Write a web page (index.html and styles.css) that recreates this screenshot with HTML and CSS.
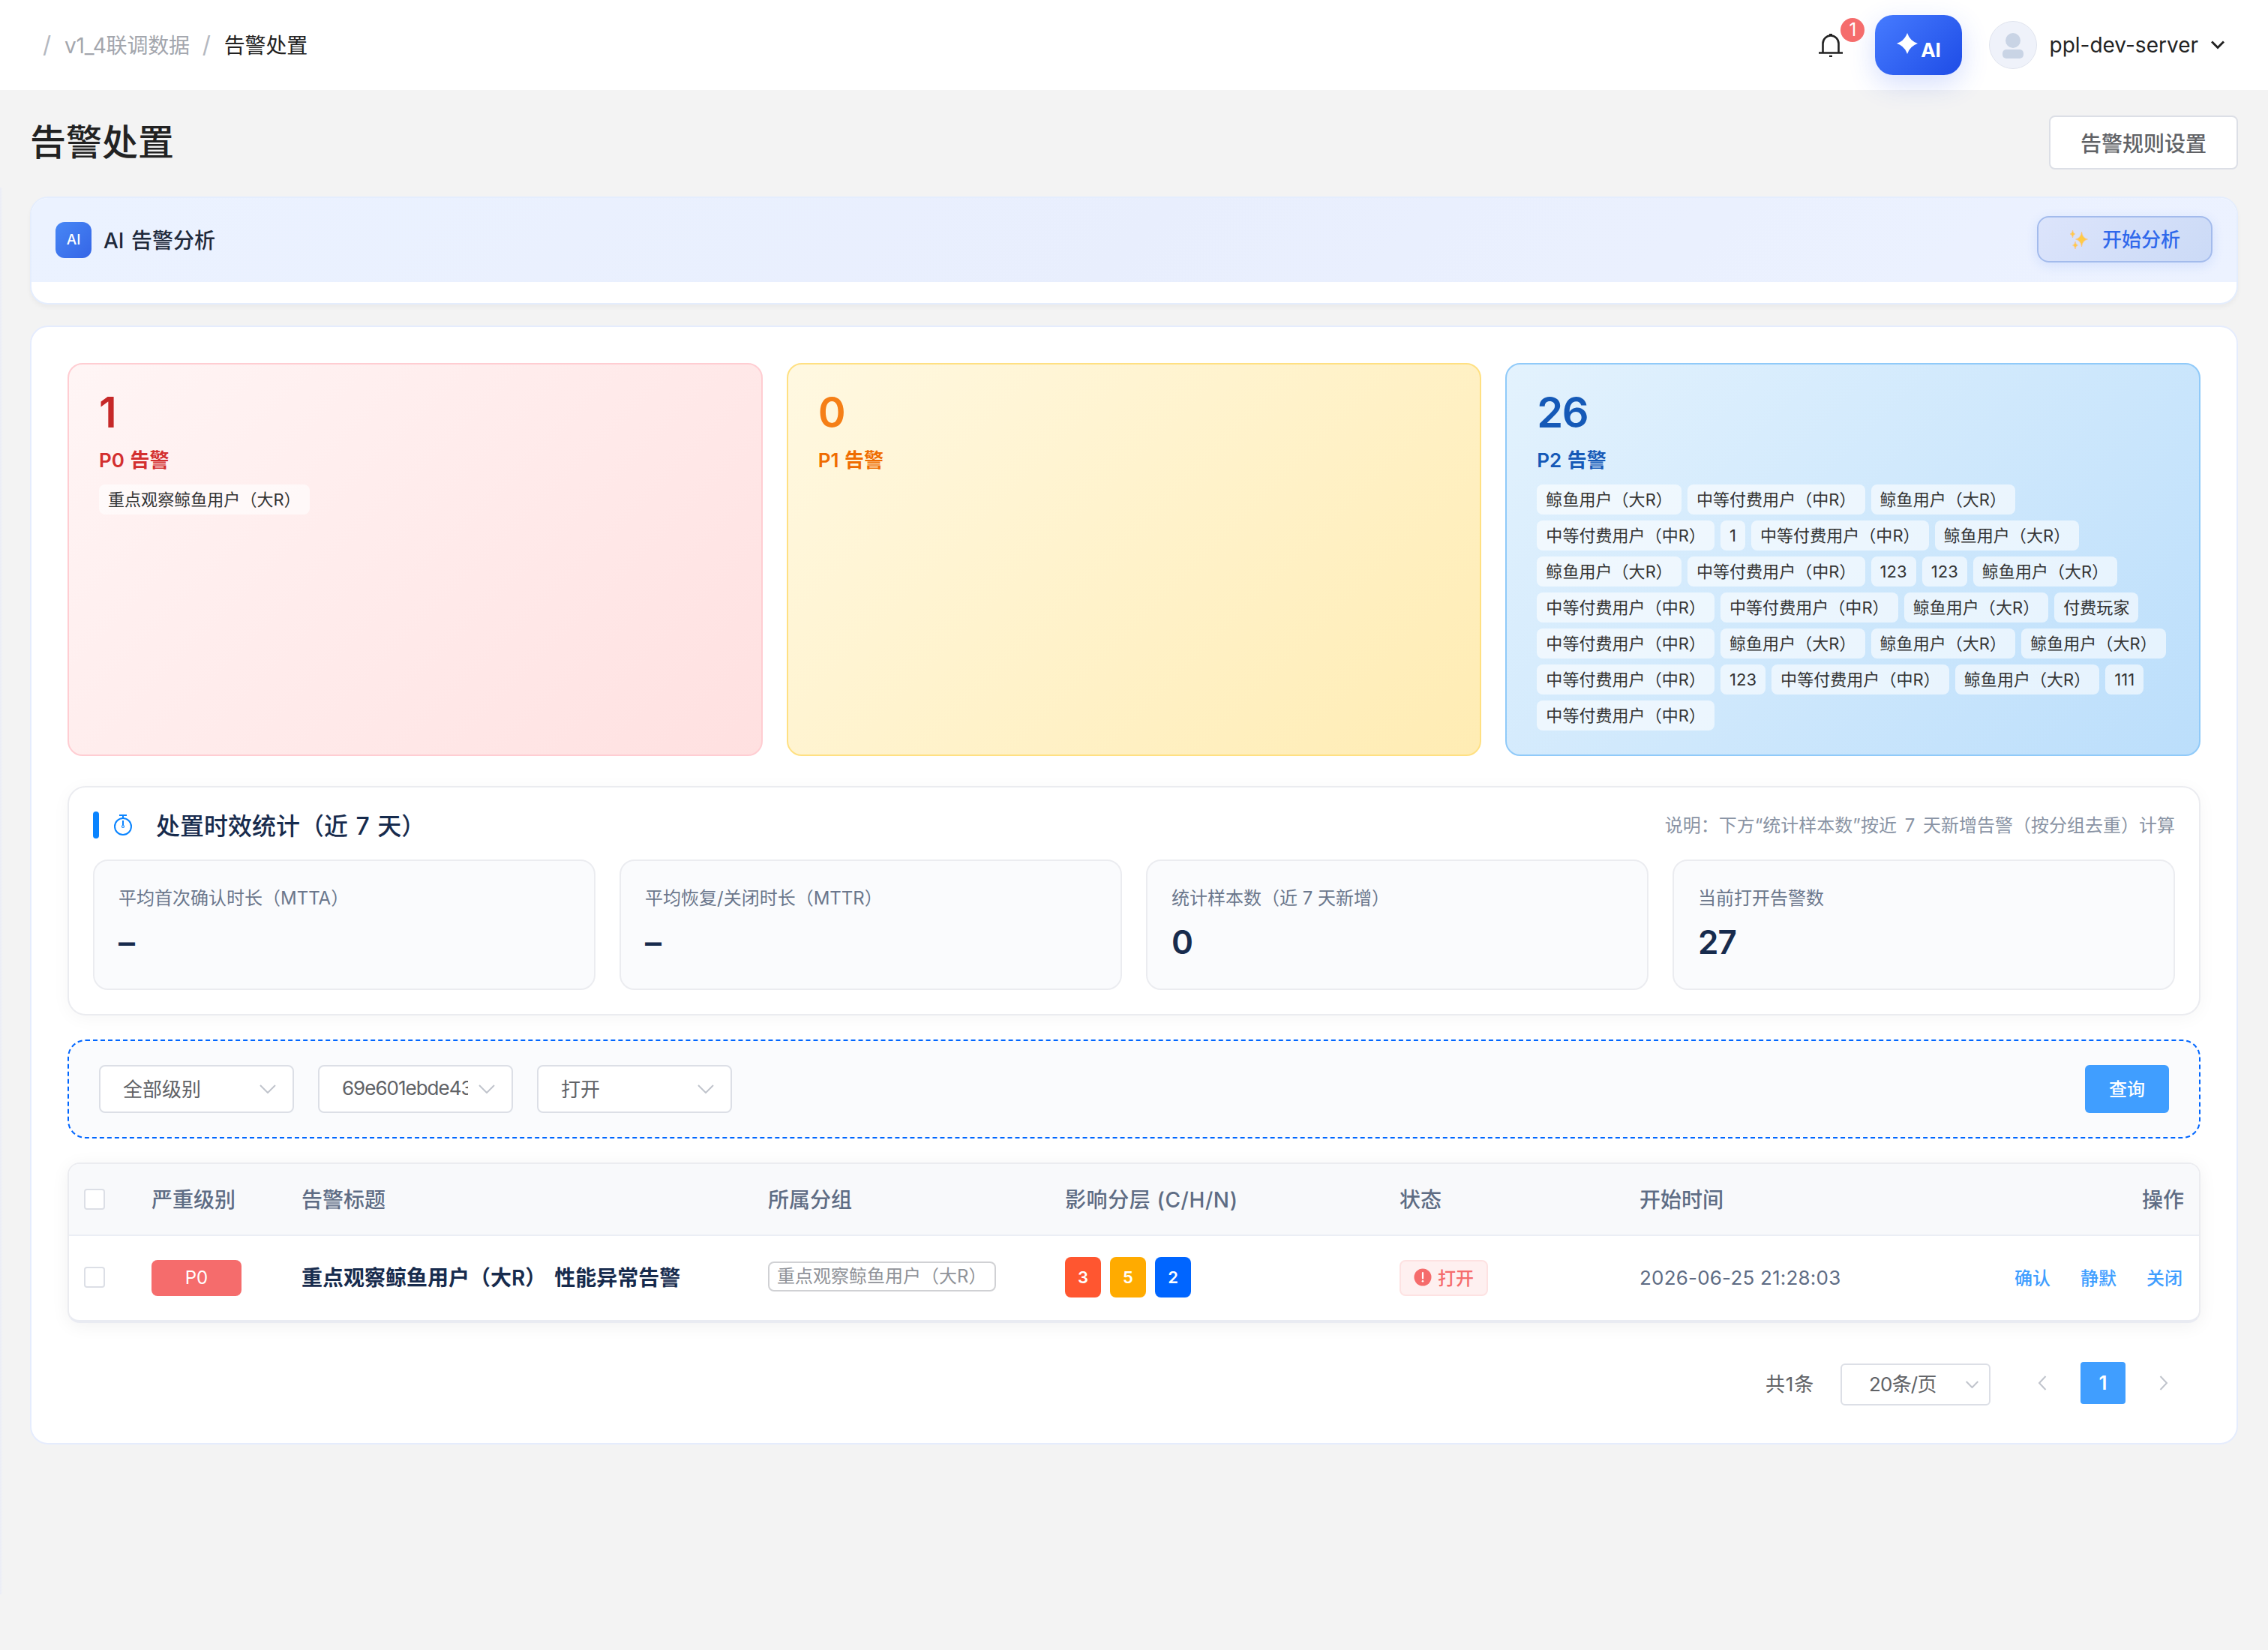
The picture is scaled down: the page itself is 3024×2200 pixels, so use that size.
FILE: index.html
```
<!DOCTYPE html>
<html lang="zh-CN">
<head>
  <meta charset="UTF-8">
  <title>告警处置</title>
  <link rel="stylesheet" href="styles.css">
</head>
<body>

  <header class="topbar">
    <nav class="breadcrumb">
      <span class="sep">/</span>
      <span class="crumb">v1_4联调数据</span>
      <span class="sep">/</span>
      <span class="crumb current">告警处置</span>
    </nav>
    <div class="top-actions">
      <div class="bell">
        <svg width="32" height="32" viewBox="0 0 32 32" fill="none" stroke="#222" stroke-width="2.6">
          <path d="M5.500 26.500V14a10.500 10.500 0 0 1 21 0v12.500"/>
          <path d="M0 26.500h32M14 2.300h4M14 31h4"/>
        </svg>
        <span class="bell-badge">1</span>
      </div>
      <button class="ai-button">
        <svg width="28" height="28" viewBox="0 0 28 28" fill="#fff">
          <path d="M14 0Q17.500 10.500 28 14Q17.500 17.500 14 28Q10.500 17.500 0 14Q10.500 10.500 14 0Z"/>
        </svg>
        <span>AI</span>
      </button>
      <div class="user">
        <svg class="avatar" width="64" height="64" viewBox="0 0 64 64">
          <circle cx="32" cy="32" r="31.500" fill="#eff2fa" stroke="#e0e4ee"/>
          <circle cx="32" cy="26" r="10" fill="#c9d4e5"/>
          <rect x="18" y="38" width="28" height="12" rx="5" fill="#c9d4e5"/>
        </svg>
        <span class="user-name">ppl-dev-server</span>
        <svg width="18" height="12" viewBox="0 0 18 12" fill="none" stroke="#222" stroke-width="3">
          <path d="M1 1.500l8 8 8-8"/>
        </svg>
      </div>
    </div>
  </header>

  <div class="side-edge"></div>

  <main class="page">
    <div class="page-head">
      <h1>告警处置</h1>
      <button class="rule-button">告警规则设置</button>
    </div>

    <section class="ai-panel">
      <div class="ai-panel-head">
        <span class="ai-logo">AI</span>
        <h2>AI 告警分析</h2>
        <button class="start-button">
          <svg width="26" height="26" viewBox="0 0 26 26" fill="#ffcb45" stroke="#f9c48f" stroke-width=".8">
            <path d="M16.500 3q1 8.500 8 10-7 1.500-8 10-1-8.500-8-10 7-1.500 8-10z"/>
            <path d="M4.500 1q.5 4.300 3.500 5-3 .7-3.500 5-.5-4.300-3.500-5 3-.7 3.500-5z"/>
            <path d="M8 16q.5 4.300 3.500 5-3 .7-3.500 5-.5-4.300-3.500-5 3-.7 3.500-5z"/>
          </svg>
          <span>开始分析</span>
        </button>
      </div>
    </section>

    <section class="board">
      <div class="levels">
        <div class="level p0">
          <div class="level-count">1</div>
          <div class="level-name">P0 告警</div>
          <div class="tags">
            <span>重点观察鲸鱼用户（大R）</span>
          </div>
        </div>
        <div class="level p1">
          <div class="level-count">0</div>
          <div class="level-name">P1 告警</div>
        </div>
        <div class="level p2">
          <div class="level-count">26</div>
          <div class="level-name">P2 告警</div>
          <div class="tags">
            <span>鲸鱼用户（大R）</span>
            <span>中等付费用户（中R）</span>
            <span>鲸鱼用户（大R）</span>
            <span>中等付费用户（中R）</span>
            <span>1</span>
            <span>中等付费用户（中R）</span>
            <span>鲸鱼用户（大R）</span>
            <span>鲸鱼用户（大R）</span>
            <span>中等付费用户（中R）</span>
            <span>123</span>
            <span>123</span>
            <span>鲸鱼用户（大R）</span>
            <span>中等付费用户（中R）</span>
            <span>中等付费用户（中R）</span>
            <span>鲸鱼用户（大R）</span>
            <span>付费玩家</span>
            <span>中等付费用户（中R）</span>
            <span>鲸鱼用户（大R）</span>
            <span>鲸鱼用户（大R）</span>
            <span>鲸鱼用户（大R）</span>
            <span>中等付费用户（中R）</span>
            <span>123</span>
            <span>中等付费用户（中R）</span>
            <span>鲸鱼用户（大R）</span>
            <span>111</span>
            <span>中等付费用户（中R）</span>
          </div>
        </div>
      </div>

      <div class="stats">
        <div class="stats-head">
          <span class="bar"></span>
          <svg width="24" height="30" viewBox="0 0 24 30" fill="none" stroke="#0a84ff" stroke-width="2">
            <circle cx="12" cy="17" r="11"/>
            <path d="M7 2h10M12 2v4M12 9v6"/>
            <circle cx="12" cy="17" r="1.500" stroke-width="1.200"/>
          </svg>
          <h3>处置时效统计（近 7 天）</h3>
          <span class="note">说明：下方“统计样本数”按近 7 天新增告警（按分组去重）计算</span>
        </div>
        <div class="stat-grid">
          <div class="stat">
            <div class="stat-label">平均首次确认时长（MTTA）</div>
            <div class="stat-value">–</div>
          </div>
          <div class="stat">
            <div class="stat-label">平均恢复/关闭时长（MTTR）</div>
            <div class="stat-value">–</div>
          </div>
          <div class="stat">
            <div class="stat-label">统计样本数（近 7 天新增）</div>
            <div class="stat-value">0</div>
          </div>
          <div class="stat">
            <div class="stat-label">当前打开告警数</div>
            <div class="stat-value">27</div>
          </div>
        </div>
      </div>

      <div class="filters">
        <div class="select">
          <span>全部级别</span>
          <svg width="22" height="12" viewBox="0 0 22 12"><path d="M1 1l10 10L21 1"/></svg>
        </div>
        <div class="select">
          <span class="group-id">69e601ebde43</span>
          <svg width="22" height="12" viewBox="0 0 22 12"><path d="M1 1l10 10L21 1"/></svg>
        </div>
        <div class="select">
          <span>打开</span>
          <svg width="22" height="12" viewBox="0 0 22 12"><path d="M1 1l10 10L21 1"/></svg>
        </div>
        <button class="query-button">查询</button>
      </div>

      <div class="table">
        <div class="row head">
          <div><span class="checkbox"></span></div>
          <div>严重级别</div>
          <div>告警标题</div>
          <div>所属分组</div>
          <div class="wide">影响分层 (C/H/N)</div>
          <div>状态</div>
          <div>开始时间</div>
          <div class="right">操作</div>
        </div>
        <div class="row">
          <div><span class="checkbox"></span></div>
          <div><span class="severity">P0</span></div>
          <div class="title">重点观察鲸鱼用户（大R） 性能异常告警</div>
          <div><span class="group">重点观察鲸鱼用户（大R）</span></div>
          <div class="layers">
            <span class="c">3</span>
            <span class="h">5</span>
            <span class="n">2</span>
          </div>
          <div>
            <span class="status">
              <svg width="24" height="24" viewBox="0 0 24 24">
                <circle cx="12" cy="12" r="11.500" fill="#f56c6c"/>
                <path d="M12 6v7.500" stroke="#fff" stroke-width="2.200" stroke-linecap="round"/>
                <circle cx="12" cy="17.300" r="1.300" fill="#fff"/>
              </svg>
              <span>打开</span>
            </span>
          </div>
          <div class="time">2026-06-25 21:28:03</div>
          <div class="ops">
            <a>确认</a>
            <a>静默</a>
            <a>关闭</a>
          </div>
        </div>
      </div>

      <div class="pager">
        <span class="total">共1条</span>
        <div class="page-size">
          <span>20条/页</span>
          <svg width="17" height="10" viewBox="0 0 17 10"><path d="M.7 1l7.800 8 7.800-8"/></svg>
        </div>
        <svg class="arrow" width="12" height="20" viewBox="0 0 12 20"><path d="M10.500 1L2 10l8.500 9"/></svg>
        <span class="page-no">1</span>
        <svg class="arrow" width="12" height="20" viewBox="0 0 12 20"><path d="M1.500 1L10 10l-8.500 9"/></svg>
      </div>
    </section>
  </main>

</body>
</html>
```
FILE: styles.css
```
* {
  box-sizing: border-box;
}

body {
  margin: 0;
  min-height: 2200px;
  background-color: #f3f3f3;
  color: #222;
  font-family: Inter, "Noto Sans CJK SC", sans-serif;
  font-size: 28px;
}

h1, h2, h3 {
  margin: 0;
  font-weight: 600;
}

button {
  font-family: inherit;
  cursor: pointer;
}

svg {
  flex: none;
}

/* top bar */
.topbar {
  display: flex;
  justify-content: space-between;
  align-items: center;
  height: 120px;
  padding: 0 58px 0 57px;
  background-color: #fff;
}

.breadcrumb {
  display: flex;
  align-items: center;
  gap: 17px;
  padding-bottom: 2px;
}

.sep {
  width: 12px;
  color: #b4b8c0;
  font-size: 31px;
}

.crumb {
  color: #a3a6ad;
  letter-spacing: -0.2px;
}

.crumb.current {
  color: #222;
}

.top-actions {
  display: flex;
  align-items: center;
}

.bell {
  position: relative;
  display: flex;
  margin-right: 43px;
}

.bell-badge {
  position: absolute;
  top: -20px;
  left: 29px;
  width: 32px;
  height: 32px;
  border-radius: 50%;
  background-color: #f56c6c;
  color: #fff;
  font-size: 24px;
  line-height: 32px;
  text-align: center;
}

.ai-button {
  display: flex;
  justify-content: center;
  align-items: center;
  gap: 4px;
  width: 116px;
  height: 80px;
  margin-right: 36px;
  border: none;
  border-radius: 24px;
  background: linear-gradient(135deg, #467bff, #1e4ce6);
  box-shadow: 0 12px 36px rgba(46, 92, 246, 0.2);
  color: #fff;
  font-size: 26px;
  font-weight: 700;
}

.ai-button svg {
  margin-bottom: 4px;
}

.ai-button span {
  padding-top: 13px;
}

.user {
  display: flex;
  align-items: center;
}

.user-name {
  margin: 0 17px 0 16px;
}

/* shadow of the collapsed sidebar */
.side-edge {
  position: absolute;
  top: 250px;
  left: 0;
  width: 4px;
  height: 1876px;
  background: linear-gradient(90deg, #ebedf6, #f3f3f3);
}

.page {
  padding: 34px 40px 0;
}

.page-head {
  display: flex;
  justify-content: space-between;
  align-items: center;
  height: 72px;
  margin-bottom: 36px;
}

h1 {
  font-size: 48px;
  font-weight: 500;
  line-height: 72px;
}

.rule-button {
  width: 252px;
  height: 72px;
  padding-bottom: 2px;
  border: 2px solid #dcdfe6;
  border-radius: 8px;
  background-color: #fff;
  color: #606266;
  font-size: 28px;
  font-weight: 500;
}

/* AI panel */
.ai-panel {
  height: 144px;
  margin-bottom: 28px;
  border: 2px solid #e4edfd;
  border-radius: 24px;
  background-color: #fff;
  box-shadow: 0 4px 6px rgba(0, 0, 0, 0.04);
  overflow: hidden;
}

.ai-panel-head {
  display: flex;
  align-items: center;
  height: 112px;
  padding: 0 32px;
  background: linear-gradient(135deg, #ebf2ff, #e8eefd 50%, #ecf2ff);
}

.ai-logo {
  width: 48px;
  height: 48px;
  margin-right: 16px;
  border-radius: 12px;
  background: linear-gradient(135deg, #4787f5, #3565e6);
  color: #fff;
  font-size: 19px;
  font-weight: 500;
  line-height: 48px;
  text-align: center;
}

.ai-panel h2 {
  padding-bottom: 2px;
  color: #1e293b;
  font-size: 28px;
  font-weight: 500;
  word-spacing: 2px;
}

.start-button {
  display: flex;
  justify-content: center;
  align-items: center;
  gap: 18px;
  width: 234px;
  height: 62px;
  margin-bottom: 2px;
  margin-left: auto;
  border: 2px solid #a3bbec;
  border-radius: 16px;
  background: linear-gradient(135deg, #dce4fb, #cbdaf6);
  box-shadow: 0 4px 16px rgba(37, 99, 235, 0.12);
  color: #2f68eb;
  font-size: 26px;
  font-weight: 500;
}

.start-button span {
  padding-bottom: 3px;
}

.board {
  height: 1492px;
  padding: 48px;
  border: 2px solid #e5ecfd;
  border-radius: 24px;
  background-color: #fff;
}

/* level cards */
.levels {
  display: grid;
  grid-template-columns: repeat(3, 1fr);
  gap: 32px;
  margin-bottom: 40px;
}

.level {
  height: 524px;
  padding: 32px 40px;
  border: 2px solid;
  border-radius: 20px;
}

.level-count {
  font-size: 56px;
  font-weight: 600;
  letter-spacing: -1.5px;
  line-height: 64px;
}

.level-name {
  margin: 16px 0;
  font-size: 26px;
  font-weight: 600;
  line-height: 32px;
  word-spacing: 1px;
}

.p0 {
  border-color: #ffcdd2;
  background: linear-gradient(135deg, #fff5f5, #ffe0e0);
  color: #d32f2f;
}

.p0 .level-count {
  color: #c62828;
}

.p1 {
  border-color: #ffe082;
  background: linear-gradient(135deg, #fff8e1, #ffecb3);
  color: #ef6c00;
}

.p1 .level-count {
  color: #f57f17;
}

.p2 {
  border-color: #90caf9;
  background: linear-gradient(135deg, #e3f2fd, #bbdefb);
  color: #1559b7;
}

.tags {
  display: flex;
  flex-wrap: wrap;
  gap: 8px;
}

.tags span {
  height: 40px;
  padding: 0 12px;
  border-radius: 8px;
  background-color: rgba(255, 255, 255, 0.6);
  color: #333;
  font-size: 22px;
  letter-spacing: 0.05px;
  line-height: 40px;
  white-space: nowrap;
}

/* statistics */
.stats {
  height: 306px;
  margin-bottom: 32px;
  padding: 32px;
  border: 2px solid #ebecf0;
  border-radius: 24px;
  background-color: #fff;
  box-shadow: 0 4px 24px rgba(0, 0, 0, 0.04);
}

.stats-head {
  display: flex;
  align-items: center;
  height: 36px;
  margin-bottom: 28px;
}

.bar {
  width: 8px;
  height: 36px;
  margin-right: 20px;
  border-radius: 4px;
  background-color: #0a84ff;
}

.stats h3 {
  margin-left: 32px;
  padding-bottom: 3px;
  color: #172b4d;
  font-size: 32px;
  font-weight: 500;
  word-spacing: 2px;
}

.note {
  margin-left: auto;
  padding-bottom: 4px;
  color: #8993a4;
  font-size: 24px;
  word-spacing: 4px;
}

.stat-grid {
  display: grid;
  grid-template-columns: repeat(4, 1fr);
  gap: 32px;
}

.stat {
  height: 174px;
  padding: 32px;
  border: 2px solid #ebecf0;
  border-radius: 20px;
  background-color: #fafbfd;
}

.stat-label {
  color: #6b778c;
  font-size: 24px;
  line-height: 36px;
}

.stat-value {
  margin-top: 14px;
  color: #172b4d;
  font-size: 44px;
  font-weight: 600;
  letter-spacing: -1px;
  line-height: 52px;
}

/* filters */
.filters {
  display: flex;
  gap: 32px;
  height: 132px;
  margin-bottom: 32px;
  padding: 32px 40px;
  border: 2px dashed #0066ff;
  border-radius: 24px;
  background-color: #fafbfd;
}

.select {
  display: flex;
  justify-content: space-between;
  align-items: center;
  width: 260px;
  height: 64px;
  padding: 0 22px 0 30px;
  border: 2px solid #dcdfe6;
  border-radius: 8px;
  background-color: #fff;
  color: #606266;
  font-size: 26px;
}

.select span {
  width: 168px;
  padding-bottom: 3px;
  overflow: hidden;
  white-space: nowrap;
}

.select .group-id {
  letter-spacing: -1px;
}

.select path,
.page-size path,
.arrow path {
  fill: none;
  stroke: #c0c4cc;
  stroke-width: 2;
}

.query-button {
  width: 112px;
  height: 64px;
  margin-left: auto;
  padding-bottom: 4px;
  border: none;
  border-radius: 6px;
  background-color: #409eff;
  color: #fff;
  font-size: 24px;
  font-weight: 500;
}

/* table */
.table {
  height: 214px;
  border: 2px solid #ebecf0;
  border-bottom: 4px solid #e9ebf2;
  border-radius: 16px;
  box-shadow: 0 4px 24px rgba(0, 0, 0, 0.06);
  overflow: hidden;
}

.row {
  display: grid;
  grid-template-columns: 90px 200px 622px 396px 446px 320px 1fr 260px;
  align-items: center;
  height: 112px;
  padding: 0 20px;
  white-space: nowrap;
}

.row.head {
  height: 96px;
  padding-bottom: 3px;
  border-bottom: 2px solid #ebeef5;
  background-color: #f8f9fb;
  color: #5e6c84;
  font-weight: 500;
}

.wide {
  letter-spacing: 0.6px;
}

.right {
  text-align: right;
}

.checkbox {
  display: block;
  width: 28px;
  height: 28px;
  margin-bottom: 2px;
  border: 2px solid #dcdfe6;
  border-radius: 4px;
  background-color: #fff;
}

.head .checkbox {
  margin: 2px 0 0;
}

.severity {
  display: block;
  width: 120px;
  height: 48px;
  border-radius: 8px;
  background-color: #f56c6c;
  color: #fff;
  font-size: 24px;
  line-height: 48px;
  text-align: center;
}

.title {
  padding-bottom: 4px;
  color: #172b4d;
  font-weight: 600;
  word-spacing: 4px;
}

.group {
  display: block;
  width: 304px;
  height: 40px;
  margin-bottom: 4px;
  padding: 0 10px;
  border: 2px solid #d0d1d4;
  border-radius: 8px;
  color: #909399;
  font-size: 24px;
  line-height: 36px;
}

.layers {
  display: flex;
  gap: 12px;
  padding-bottom: 2px;
}

.layers span {
  width: 48px;
  height: 54px;
  border-radius: 8px;
  color: #fff;
  font-size: 22px;
  font-weight: 600;
  line-height: 54px;
  text-align: center;
}

.c {
  background-color: #ff5630;
}

.h {
  background-color: #ffab00;
}

.n {
  background-color: #0065ff;
}

.status {
  display: flex;
  align-items: center;
  gap: 8px;
  width: 118px;
  height: 48px;
  padding: 0 0 3px 17px;
  border: 2px solid #fde2e2;
  border-radius: 8px;
  background-color: #fef0f0;
  color: #f56c6c;
  font-size: 24px;
  font-weight: 500;
}

.status span {
  padding-bottom: 1px;
}

.time {
  padding-bottom: 2px;
  color: #5e6c84;
  font-size: 26px;
  letter-spacing: 0.2px;
}

.ops {
  display: flex;
  justify-content: flex-end;
  gap: 40px;
  padding: 0 2px 4px 0;
  color: #409eff;
  font-size: 24px;
  font-weight: 500;
}

/* pagination */
.pager {
  display: flex;
  justify-content: flex-end;
  align-items: center;
  height: 56px;
  margin-top: 53px;
  padding-right: 43px;
  color: #606266;
  font-size: 26px;
}

.total {
  padding-bottom: 4px;
  letter-spacing: 0.8px;
}

.page-size {
  display: flex;
  justify-content: space-between;
  align-items: center;
  width: 200px;
  height: 56px;
  margin: 2px 63px 0 35px;
  padding: 0 14px 0 36px;
  border: 2px solid #dcdfe6;
  border-radius: 6px;
}

.page-size span {
  padding-bottom: 5px;
  letter-spacing: -0.8px;
}

.arrow {
  margin-bottom: 3px;
}

.page-no {
  width: 60px;
  height: 56px;
  margin: 0 45px 2px;
  border-radius: 4px;
  background-color: #409eff;
  color: #fff;
  font-weight: 600;
  line-height: 56px;
  text-align: center;
}
```
